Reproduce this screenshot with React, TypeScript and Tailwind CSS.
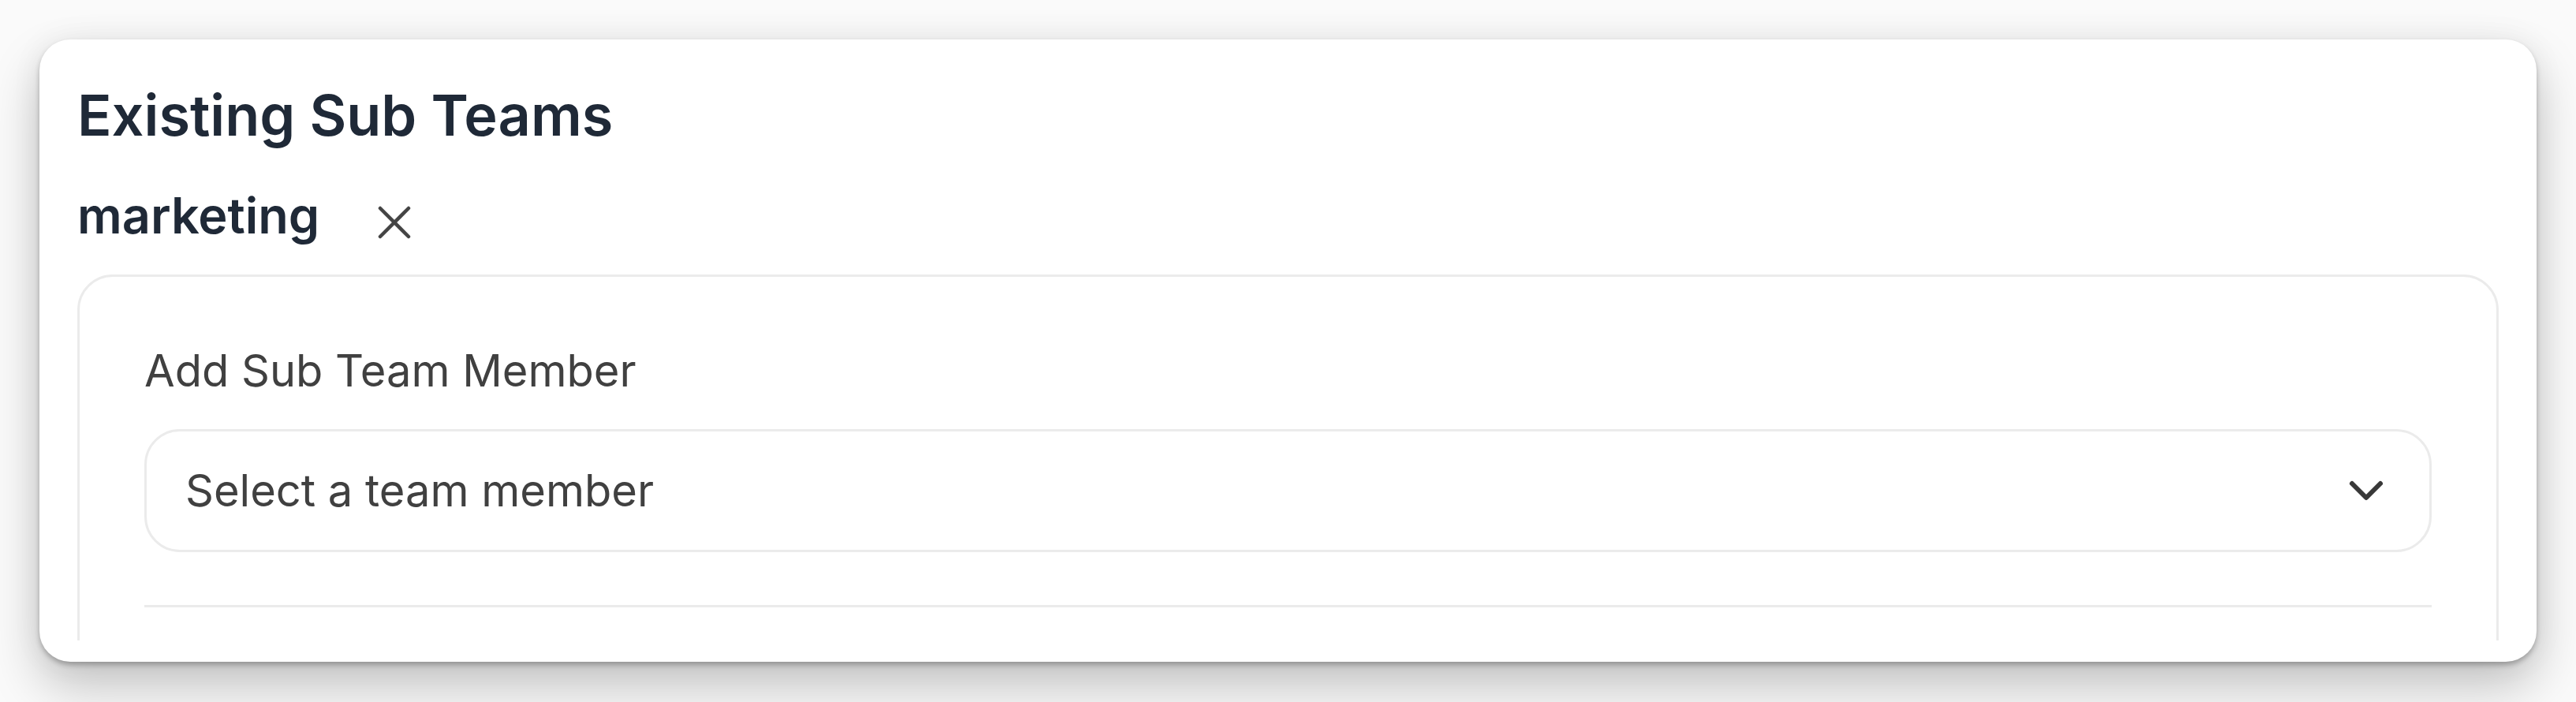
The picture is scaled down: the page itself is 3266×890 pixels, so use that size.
import React from "react";

function XIcon() {
  return (
    <svg viewBox="0 0 24 24" fill="none" stroke="currentColor" strokeWidth={1.5} strokeLinecap="round" strokeLinejoin="round" className="h-[72px] w-[72px]">
      <path d="M6 18 18 6M6 6l12 12" />
    </svg>
  );
}

function ChevronDown() {
  return (
    <svg viewBox="0 0 24 24" fill="none" stroke="currentColor" strokeWidth={2} strokeLinecap="round" strokeLinejoin="round" className="h-[72px] w-[72px]">
      <path d="m6 9 6 6 6-6" />
    </svg>
  );
}

export default function App() {
  return (
    <div className="min-h-screen w-full bg-[#fafafa] p-[50px] font-['Inter','Noto_Sans',sans-serif]">
      <div className="rounded-[39px] bg-white px-[48px] pt-[48px] pb-[27px] shadow-[0_4px_6px_rgba(0,0,0,0.25),0_32px_64px_rgba(0,0,0,0.22),0_0_40px_rgba(0,0,0,0.06)]">
        <div className="h-[714px] overflow-hidden">
          <h2 className="text-[72px] leading-[96px] font-semibold text-[#1f2937]">Existing Sub Teams</h2>
          <div className="mt-[37px] flex h-[84px] items-start">
            <span className="text-[63px] leading-[84px] font-semibold text-[#1f2937]">marketing</span>
            <button className="ml-[59px] mt-[15px] text-[#444444]">
              <XIcon />
            </button>
          </div>
          <div className="mt-[33px] rounded-[45px] border-[3px] border-[#ebebeb] px-[82px] pt-[83px] pb-[300px]">
            <label className="block text-[56px] leading-[72px] text-[#404040]">Add Sub Team Member</label>
            <div className="mt-[38px] flex h-[156px] items-center justify-between rounded-[45px] border-[3px] border-[#ebebeb] pl-[49px] pr-[44px]">
              <span className="text-[56px] leading-[72px] text-[#404040]">Select a team member</span>
              <span className="text-[#383838]">
                <ChevronDown />
              </span>
            </div>
            <div className="mt-[67px] h-[3px] bg-[#ebebeb]" />
          </div>
        </div>
      </div>
    </div>
  );
}
